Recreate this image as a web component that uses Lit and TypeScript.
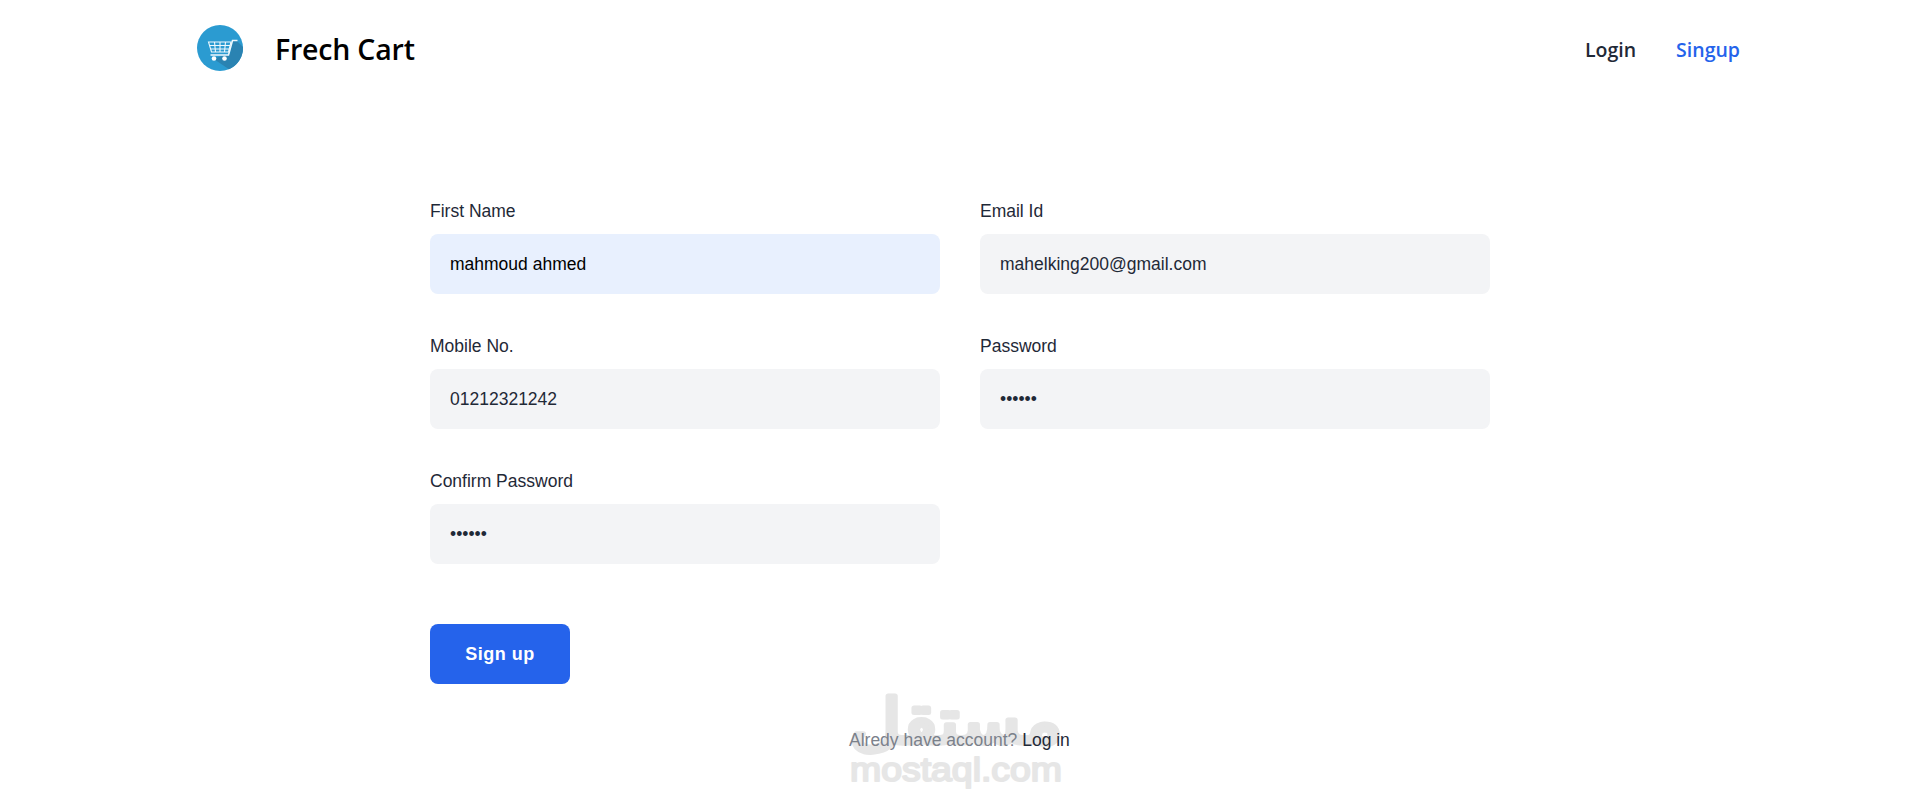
import { LitElement, html, css, nothing } from "lit";
import { customElement, property } from "lit/decorators.js";

@customElement("nav-bar")
export class NavBar extends LitElement {
  static styles = css`
    :host {
      display: block;
      font-family: "Open Sans", "Noto Sans", sans-serif;
    }
    nav {
      display: flex;
      justify-content: space-between;
      align-items: center;
      height: 100px;
      padding: 0 174px 0 195px;
    }
    .brand {
      display: flex;
      align-items: center;
      gap: 30px;
    }
    .logo {
      width: 50px;
      height: 50px;
      margin-top: -4px;
    }
    .name {
      margin-top: -2px;
      color: #000;
      font-size: 28.5px;
      font-weight: 600;
      letter-spacing: -0.2px;
    }
    .links {
      display: flex;
      gap: 40px;
      margin-top: -2px;
      font-size: 19.5px;
      font-weight: 600;
    }
    a {
      color: #1f2937;
      text-decoration: none;
    }
    a.active {
      color: #2563eb;
    }
  `;

  render() {
    return html`
      <nav>
        <div class="brand">
          <svg class="logo" viewBox="0 0 50 50" fill="none">
            <circle cx="25" cy="25" r="23" fill="#2b9bd1" />
            <path d="M38 17h3L48 24A23 23 0 0 1 34 46.2L18 35.5 35 31Z" fill="#2a83b2" />
            <g stroke="#eef8fd" stroke-width="1.1">
              <path d="M42.5 17.5H37.5L33.5 32H15.5" stroke-width="1.5" />
              <path d="M13.5 19H36L33.5 29H16.5Z M14.5 22.5H35 M15.5 26H34 M19.5 19l1 10 M25 19v10 M30.5 19l-1 10" />
            </g>
            <circle cx="19" cy="35.5" r="2.3" fill="#fff" />
            <circle cx="29.5" cy="35.5" r="2.3" fill="#fff" />
          </svg>
          <span class="name">Frech Cart</span>
        </div>
        <div class="links">
          <a href="#login">Login</a>
          <a href="#signup" class="active">Singup</a>
        </div>
      </nav>
    `;
  }
}

@customElement("form-field")
export class FormField extends LitElement {
  static styles = css`
    :host {
      display: block;
    }
    label {
      display: block;
      line-height: 22px;
      margin-bottom: 12px;
    }
    input {
      display: block;
      box-sizing: border-box;
      width: 100%;
      height: 60px;
      padding: 0 20px;
      border: 0;
      border-radius: 8px;
      background: #f3f4f6;
      color: #1f2937;
      font: inherit;
      outline: none;
    }
    input.filled {
      background: #e8f0fe;
      color: #000;
    }
  `;

  @property() label = "";
  @property() value = "";
  @property() type = "text";
  @property({ type: Boolean }) autofilled = false;

  render() {
    return html`
      <label for="field">${this.label}</label>
      <input
        id="field"
        class=${this.autofilled ? "filled" : nothing}
        type=${this.type}
        .value=${this.value}
      />
    `;
  }
}

@customElement("site-watermark")
export class SiteWatermark extends LitElement {
  static styles = css`
    :host {
      display: block;
    }
    svg {
      display: block;
      overflow: visible;
    }
    text {
      fill: #e6e6e6;
      stroke: #e6e6e6;
      stroke-linejoin: round;
    }
    .arabic {
      font-family: "DejaVu Sans", sans-serif;
      font-size: 62px;
      stroke-width: 5px;
    }
    .latin {
      font-family: "Liberation Sans", sans-serif;
      font-size: 34px;
      stroke-width: 2px;
    }
  `;

  render() {
    return html`
      <svg width="214" height="104" viewBox="0 0 214 104">
        <text class="arabic" x="106" y="51" text-anchor="middle" textLength="213" lengthAdjust="spacingAndGlyphs">مستقل</text>
        <text class="latin" x="0" y="89" textLength="212" lengthAdjust="spacingAndGlyphs">mostaql.com</text>
      </svg>
    `;
  }
}

@customElement("app-root")
export class AppRoot extends LitElement {
  static styles = css`
    :host {
      display: block;
      position: relative;
      height: 806px;
      overflow: hidden;
      background: #fff;
      color: #1f2937;
      font-family: "Liberation Sans", Arial, sans-serif;
      font-size: 17.5px;
    }
    form {
      display: grid;
      grid-template-columns: 1fr 1fr;
      gap: 41px 40px;
      width: 1060px;
      margin: 0 0 0 430px;
      padding-top: 100px;
    }
    .actions {
      grid-column: 1 / -1;
      padding-top: 19px;
    }
    button {
      display: block;
      width: 140px;
      height: 60px;
      padding: 0;
      border: 0;
      border-radius: 8px;
      background: #2563eb;
      color: #fff;
      font: inherit;
      font-size: 18px;
      font-weight: 700;
      letter-spacing: 0.5px;
      cursor: pointer;
    }
    .account {
      position: relative;
      margin: 44px 0 0 849px;
      line-height: 25px;
      color: #7b818b;
    }
    .account a {
      color: #1f2937;
      text-decoration: none;
    }
    site-watermark {
      position: absolute;
      left: 850px;
      top: 692px;
      pointer-events: none;
    }
  `;

  render() {
    return html`
      <nav-bar></nav-bar>
      <form @submit=${(e: Event) => e.preventDefault()}>
        <form-field label="First Name" value="mahmoud ahmed" autofilled></form-field>
        <form-field label="Email Id" value="mahelking200@gmail.com"></form-field>
        <form-field label="Mobile No." value="01212321242"></form-field>
        <form-field label="Password" type="password" value="123456"></form-field>
        <form-field label="Confirm Password" type="password" value="123456"></form-field>
        <div class="actions"><button>Sign up</button></div>
      </form>
      <site-watermark></site-watermark>
      <div class="account">Alredy have account? <a href="#login">Log in</a></div>
    `;
  }
}
